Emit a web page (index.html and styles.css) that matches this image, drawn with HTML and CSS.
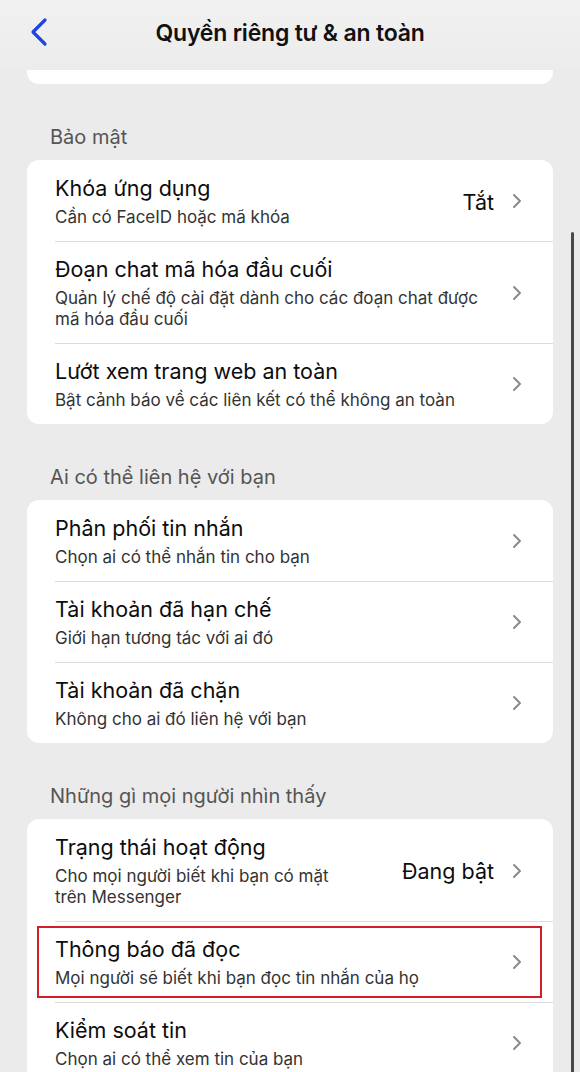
FILE: index.html
```html
<!DOCTYPE html>
<html lang="vi">
<head>
<meta charset="utf-8">
<title>Quyền riêng tư &amp; an toàn</title>
<link rel="stylesheet" href="styles.css">
</head>
<body>
<div class="screen">
  <header class="nav">
    <span class="back">
      <svg width="18" height="30" viewBox="0 0 18 30"><path d="M15 3 L3 15 L15 27" fill="none" stroke="#1d43e0" stroke-width="3.2" stroke-linecap="round" stroke-linejoin="round"/></svg>
    </span>
    <h1 class="nav-title">Quyền riêng tư &amp; an toàn</h1>
  </header>

  <div class="card-tail"></div>

  <h2 class="group-label">Bảo mật</h2>
  <section class="card">
    <div class="row">
      <div class="text">
        <div class="title">Khóa ứng dụng</div>
        <div class="sub">Cần có FaceID hoặc mã khóa</div>
      </div>
      <span class="value">Tắt</span>
      <svg class="chev" width="10" height="16" viewBox="0 0 10 16"><path d="M2 2 L8 8 L2 14" fill="none" stroke="#8a8a8e" stroke-width="2" stroke-linecap="round" stroke-linejoin="round"/></svg>
    </div>
    <div class="row">
      <div class="text">
        <div class="title">Đoạn chat mã hóa đầu cuối</div>
        <div class="sub">Quản lý chế độ cài đặt dành cho các đoạn chat được mã hóa đầu cuối</div>
      </div>
      <svg class="chev" width="10" height="16" viewBox="0 0 10 16"><path d="M2 2 L8 8 L2 14" fill="none" stroke="#8a8a8e" stroke-width="2" stroke-linecap="round" stroke-linejoin="round"/></svg>
    </div>
    <div class="row">
      <div class="text">
        <div class="title">Lướt xem trang web an toàn</div>
        <div class="sub">Bật cảnh báo về các liên kết có thể không an toàn</div>
      </div>
      <svg class="chev" width="10" height="16" viewBox="0 0 10 16"><path d="M2 2 L8 8 L2 14" fill="none" stroke="#8a8a8e" stroke-width="2" stroke-linecap="round" stroke-linejoin="round"/></svg>
    </div>
  </section>

  <h2 class="group-label">Ai có thể liên hệ với bạn</h2>
  <section class="card">
    <div class="row">
      <div class="text">
        <div class="title">Phân phối tin nhắn</div>
        <div class="sub">Chọn ai có thể nhắn tin cho bạn</div>
      </div>
      <svg class="chev" width="10" height="16" viewBox="0 0 10 16"><path d="M2 2 L8 8 L2 14" fill="none" stroke="#8a8a8e" stroke-width="2" stroke-linecap="round" stroke-linejoin="round"/></svg>
    </div>
    <div class="row">
      <div class="text">
        <div class="title">Tài khoản đã hạn chế</div>
        <div class="sub">Giới hạn tương tác với ai đó</div>
      </div>
      <svg class="chev" width="10" height="16" viewBox="0 0 10 16"><path d="M2 2 L8 8 L2 14" fill="none" stroke="#8a8a8e" stroke-width="2" stroke-linecap="round" stroke-linejoin="round"/></svg>
    </div>
    <div class="row">
      <div class="text">
        <div class="title">Tài khoản đã chặn</div>
        <div class="sub">Không cho ai đó liên hệ với bạn</div>
      </div>
      <svg class="chev" width="10" height="16" viewBox="0 0 10 16"><path d="M2 2 L8 8 L2 14" fill="none" stroke="#8a8a8e" stroke-width="2" stroke-linecap="round" stroke-linejoin="round"/></svg>
    </div>
  </section>

  <h2 class="group-label">Những gì mọi người nhìn thấy</h2>
  <section class="card">
    <div class="row">
      <div class="text narrow">
        <div class="title">Trạng thái hoạt động</div>
        <div class="sub">Cho mọi người biết khi bạn có mặt trên Messenger</div>
      </div>
      <span class="value">Đang bật</span>
      <svg class="chev" width="10" height="16" viewBox="0 0 10 16"><path d="M2 2 L8 8 L2 14" fill="none" stroke="#8a8a8e" stroke-width="2" stroke-linecap="round" stroke-linejoin="round"/></svg>
    </div>
    <div class="row highlighted">
      <div class="text">
        <div class="title">Thông báo đã đọc</div>
        <div class="sub">Mọi người sẽ biết khi bạn đọc tin nhắn của họ</div>
      </div>
      <svg class="chev" width="10" height="16" viewBox="0 0 10 16"><path d="M2 2 L8 8 L2 14" fill="none" stroke="#8a8a8e" stroke-width="2" stroke-linecap="round" stroke-linejoin="round"/></svg>
      <span class="mark"></span>
    </div>
    <div class="row">
      <div class="text">
        <div class="title">Kiểm soát tin</div>
        <div class="sub">Chọn ai có thể xem tin của bạn</div>
      </div>
      <svg class="chev" width="10" height="16" viewBox="0 0 10 16"><path d="M2 2 L8 8 L2 14" fill="none" stroke="#8a8a8e" stroke-width="2" stroke-linecap="round" stroke-linejoin="round"/></svg>
    </div>
  </section>

  <span class="scrollbar"></span>
</div>
</body>
</html>
```

FILE: styles.css
```css
* { box-sizing: border-box; }

html, body {
  margin: 0;
  padding: 0;
}

body {
  background: #ebebeb;
  font-family: Inter, "Noto Sans", "DejaVu Sans", sans-serif;
  color: #111;
}

.screen {
  position: relative;
  width: 580px;
  height: 1072px;
  overflow: hidden;
  background: #ebebeb;
}

.nav {
  position: relative;
  height: 70px;
  display: flex;
  align-items: center;
  justify-content: center;
  background: linear-gradient(#f1f1f1, #ececec);
}

.back {
  position: absolute;
  left: 30px;
  top: 17px;
  display: flex;
}

.nav-title {
  margin: 0;
  margin-top: -4px;
  font-size: 23px;
  font-weight: 600;
  letter-spacing: -0.2px;
  color: #111;
}

.card-tail {
  height: 14px;
  margin: 0 27px;
  background: #fff;
  border-radius: 0 0 12px 12px;
}

.group-label {
  margin: 41px 0 11px 50px;
  font-size: 20px;
  line-height: 24px;
  font-weight: 400;
  color: #555;
}

.card {
  margin: 0 27px;
  background: #fff;
  border-radius: 12px;
  overflow: hidden;
}

.row {
  position: relative;
  display: flex;
  align-items: center;
  padding: 14px 31px 13px 28px;
}

.row + .row::before {
  content: "";
  position: absolute;
  left: 28px;
  right: 0;
  top: 0;
  height: 1px;
  background: #dcdcdc;
}

.text {
  flex: 1;
  min-width: 0;
}

.text.narrow {
  flex: 0 0 290px;
  margin-right: auto;
}

.title {
  font-size: 21.5px;
  line-height: 28px;
  color: #0d0d0d;
}

.sub {
  margin-top: 5px;
  font-size: 17px;
  line-height: 21px;
  color: #333;
}

.value {
  font-size: 21.5px;
  color: #0d0d0d;
  margin-right: 18px;
  margin-top: 1px;
  white-space: nowrap;
}

.chev {
  flex: none;
  margin-left: 14px;
}

.value + .chev { margin-left: 0; }

.mark {
  position: absolute;
  left: 10px;
  right: 11px;
  top: 5px;
  bottom: 4px;
  border: 2.5px solid #d11f2a;
  pointer-events: none;
}

.scrollbar {
  position: absolute;
  left: 571px;
  top: 232px;
  width: 3px;
  bottom: 0;
  background: #4a4a4a;
  border-radius: 2px 2px 0 0;
}
```
